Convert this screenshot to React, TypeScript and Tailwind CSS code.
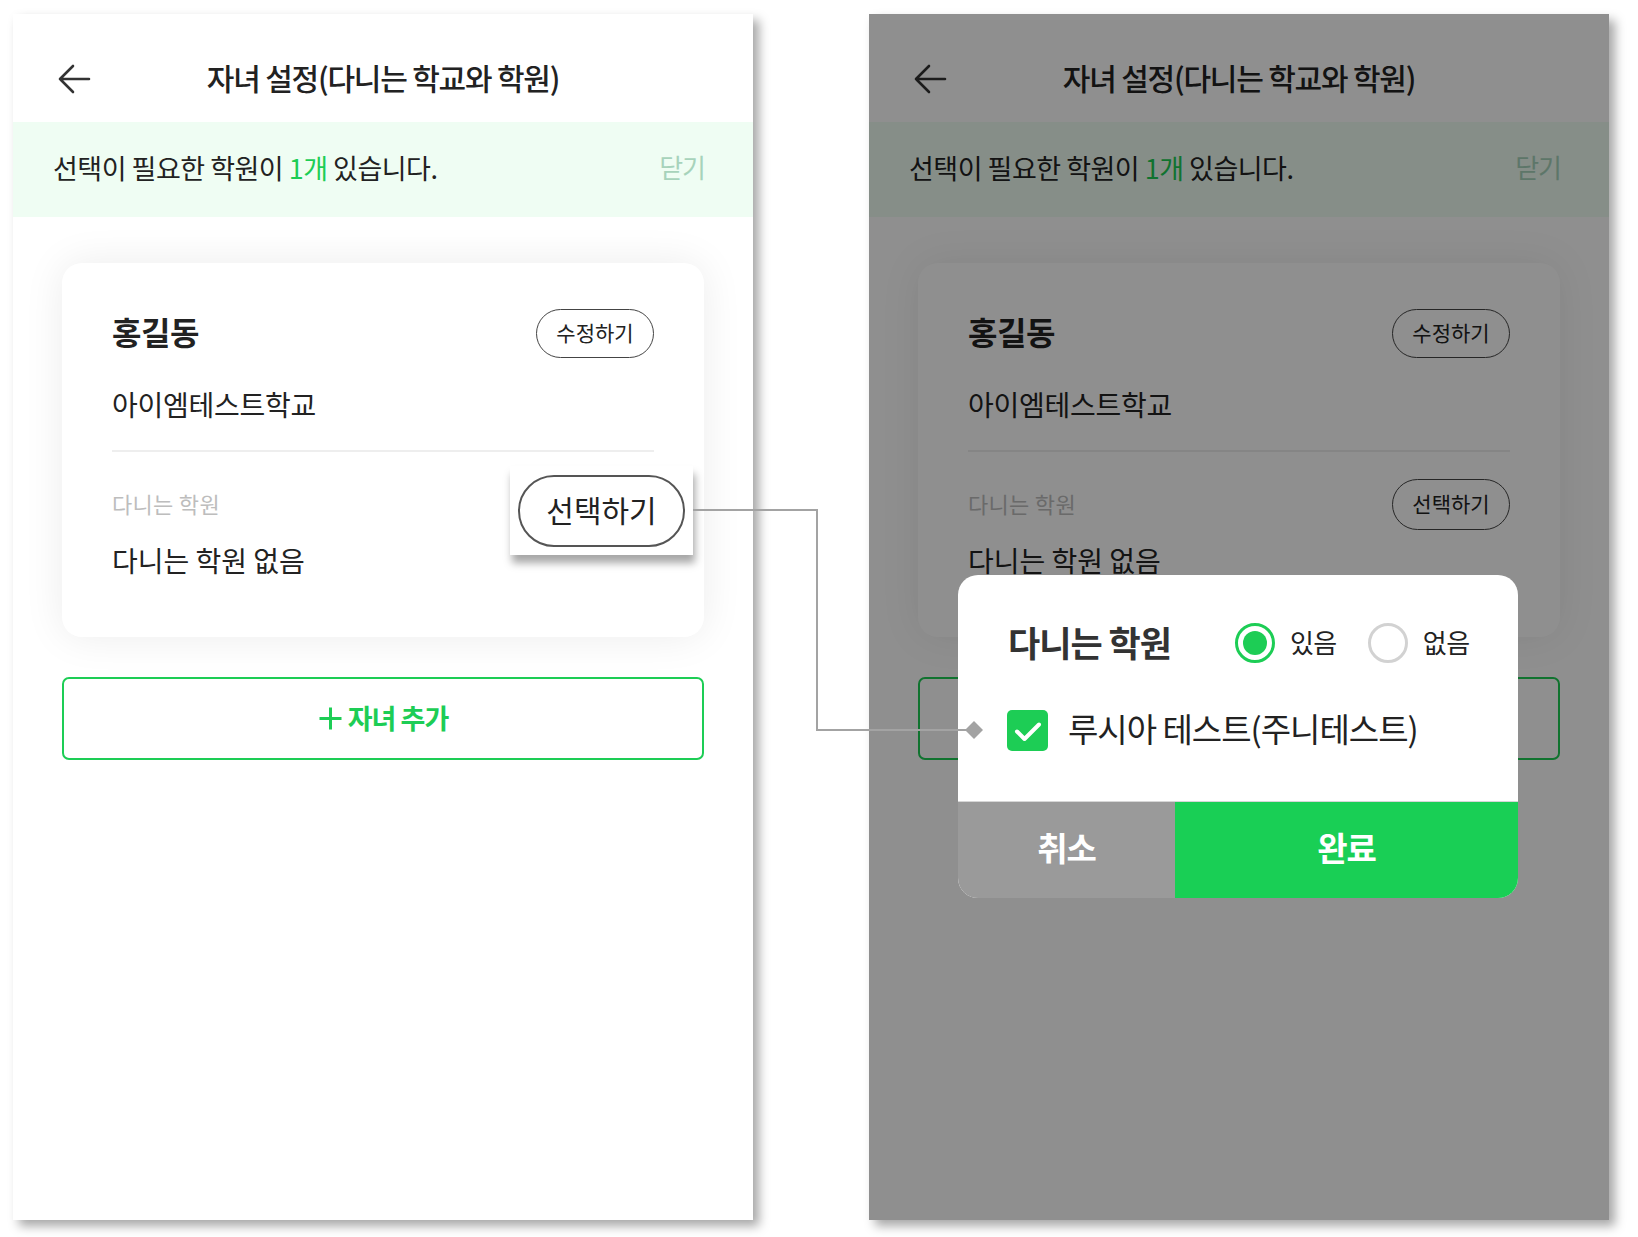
import React from "react";

const FONT = { fontFamily: '"Noto Sans CJK KR", "Noto Sans", sans-serif' };

function BackArrow() {
  return (
    <svg width="34" height="30" viewBox="0 0 34 30" fill="none">
      <path d="M32 15H3M16 2L3 15l13 13" stroke="#333" strokeWidth="2.6" strokeLinecap="round" strokeLinejoin="round" />
    </svg>
  );
}

function Screen() {
  return (
    <div className="flex flex-col w-full h-full bg-white">
      <div className="flex items-center h-[108px] pt-[22px]">
        <div className="ml-[44px] w-[34px] flex items-center">
          <BackArrow />
        </div>
        <div className="flex-1 text-center text-[30px] font-medium tracking-[-1.2px] text-[#222] leading-none pb-[4px]">
          자녀 설정(다니는 학교와 학원)
        </div>
        <div className="w-[78px]" />
      </div>
      <div className="flex items-center justify-between h-[95px] bg-[#effdf3] pl-[40px] pr-[48px] pb-[5px]">
        <div className="text-[27px] tracking-[-0.5px] text-[#222] leading-none">
          선택이 필요한 학원이 <span className="text-[#1dcd55]">1개</span> 있습니다.
        </div>
        <div className="text-[26px] tracking-[-1px] text-[#a7d3bb] leading-none">닫기</div>
      </div>
      <div className="mx-[49px] mt-[46px] h-[374px] rounded-[20px] bg-white shadow-[0_0_40px_rgba(0,0,0,0.08)] px-[50px] pt-[46px]">
        <div className="flex items-center justify-between h-[49px]">
          <div className="text-[32px] font-bold tracking-[-0.5px] text-[#222] leading-none pb-[5px]">홍길동</div>
          <div className="w-[118px] h-[49px] rounded-full border-[1.5px] border-[#444] flex items-center justify-center text-[21px] text-[#222] pb-[2px]">
            수정하기
          </div>
        </div>
        <div className="mt-[29px] h-[36px] flex items-center text-[28px] tracking-[-0.25px] text-[#222] pb-[3px]">아이엠테스트학교</div>
        <div className="mt-[27px] h-[2px] bg-[#eeeeee]" />
        <div className="mt-[27px] flex items-center justify-between h-[51px]">
          <div className="text-[22px] tracking-[0.3px] text-[#bdbdbd] leading-none pb-[3px]">다니는 학원</div>
          <div className="w-[118px] h-[51px] rounded-full border-[1.5px] border-[#444] flex items-center justify-center text-[21px] text-[#222] pb-[2px]">
            선택하기
          </div>
        </div>
        <div className="mt-[13px] h-[36px] flex items-center text-[28px] text-[#222] pb-[3px]">다니는 학원 없음</div>
      </div>
      <div className="mx-[49px] mt-[40px] h-[83px] rounded-[7px] border-2 border-[#1dcd55] flex items-center justify-center gap-[5px] text-[#1dcd55]">
        <svg width="25" height="25" viewBox="0 0 25 25">
          <path d="M12.5 1.5v22M1.5 12.5h22" stroke="#1dcd55" strokeWidth="3" />
        </svg>
        <span className="text-[27px] font-bold tracking-[-1px] leading-none pb-[3px]">자녀 추가</span>
      </div>
    </div>
  );
}

function Modal() {
  return (
    <div className="absolute left-[89px] top-[561px] w-[560px] h-[323px] rounded-[20px] bg-white overflow-hidden flex flex-col">
      <div className="flex items-center pl-[50px] pt-[48px] h-[88px]">
        <div className="text-[35px] font-bold tracking-[-1px] text-[#333] leading-none pb-[4px]">다니는 학원</div>
        <div className="ml-[64px] w-[40px] h-[40px] rounded-full border-[3px] border-[#1dcd55] flex items-center justify-center">
          <div className="w-[24px] h-[24px] rounded-full bg-[#1dcd55]" />
        </div>
        <div className="ml-[15px] text-[26px] tracking-[-0.5px] text-[#222] leading-none pb-[3px]">있음</div>
        <div className="ml-[31px] w-[40px] h-[40px] rounded-full border-[3px] border-[#d2d2d2]" />
        <div className="ml-[15px] text-[26px] tracking-[-0.5px] text-[#222] leading-none pb-[3px]">없음</div>
      </div>
      <div className="flex items-center pl-[49px] mt-[47px] h-[41px]">
        <div className="w-[41px] h-[41px] rounded-[5px] bg-[#1dcd55] flex items-center justify-center">
          <svg width="32" height="32" viewBox="0 0 32 32" fill="none">
            <path d="M5 16.5l7.5 7.5L27 9.5" stroke="white" strokeWidth="4" strokeLinecap="round" strokeLinejoin="round" />
          </svg>
        </div>
        <div className="ml-[20px] text-[33px] tracking-[-1px] text-[#222] leading-none pb-[4px]">루시아 테스트(주니테스트)</div>
      </div>
      <div className="mt-auto flex h-[97px] border-t border-[#d6d6d6]">
        <div className="w-[217px] bg-[#9a9a9a] flex items-center justify-center text-[33px] font-bold tracking-[-1px] text-white pb-[4px]">취소</div>
        <div className="flex-1 bg-[#19cf55] flex items-center justify-center text-[33px] font-bold tracking-[-1px] text-white pb-[4px]">완료</div>
      </div>
    </div>
  );
}

export default function App() {
  return (
    <div className="relative w-[1638px] h-[1237px] bg-white overflow-hidden" style={FONT}>
      <div className="flex gap-[116px] pl-[13px] pt-[14px]">
        <div className="relative w-[740px] h-[1206px] shadow-[6px_6px_10px_rgba(0,0,0,0.35)]">
          <Screen />
          <div className="absolute left-[497px] top-[452px] w-[183px] h-[89px] bg-white shadow-[2px_8px_8px_rgba(0,0,0,0.35)] flex items-center justify-center">
            <div className="w-[167px] h-[72px] rounded-full border-2 border-[#555] flex items-center justify-center text-[30px] text-[#222] pb-[3px]">
              선택하기
            </div>
          </div>
        </div>
        <div className="relative w-[740px] h-[1206px] shadow-[6px_6px_10px_rgba(0,0,0,0.35)]">
          <Screen />
          <div className="absolute inset-0 bg-black/[0.44]" />
          <Modal />
        </div>
      </div>
      <svg className="absolute left-0 top-0 pointer-events-none" width="1638" height="1237">
        <polyline points="693,510 817,510 817,730 968,730" fill="none" stroke="#a3a3a3" strokeWidth="2" />
        <polygon points="974,721 983,730 974,739 965,730" fill="#a3a3a3" />
      </svg>
    </div>
  );
}
